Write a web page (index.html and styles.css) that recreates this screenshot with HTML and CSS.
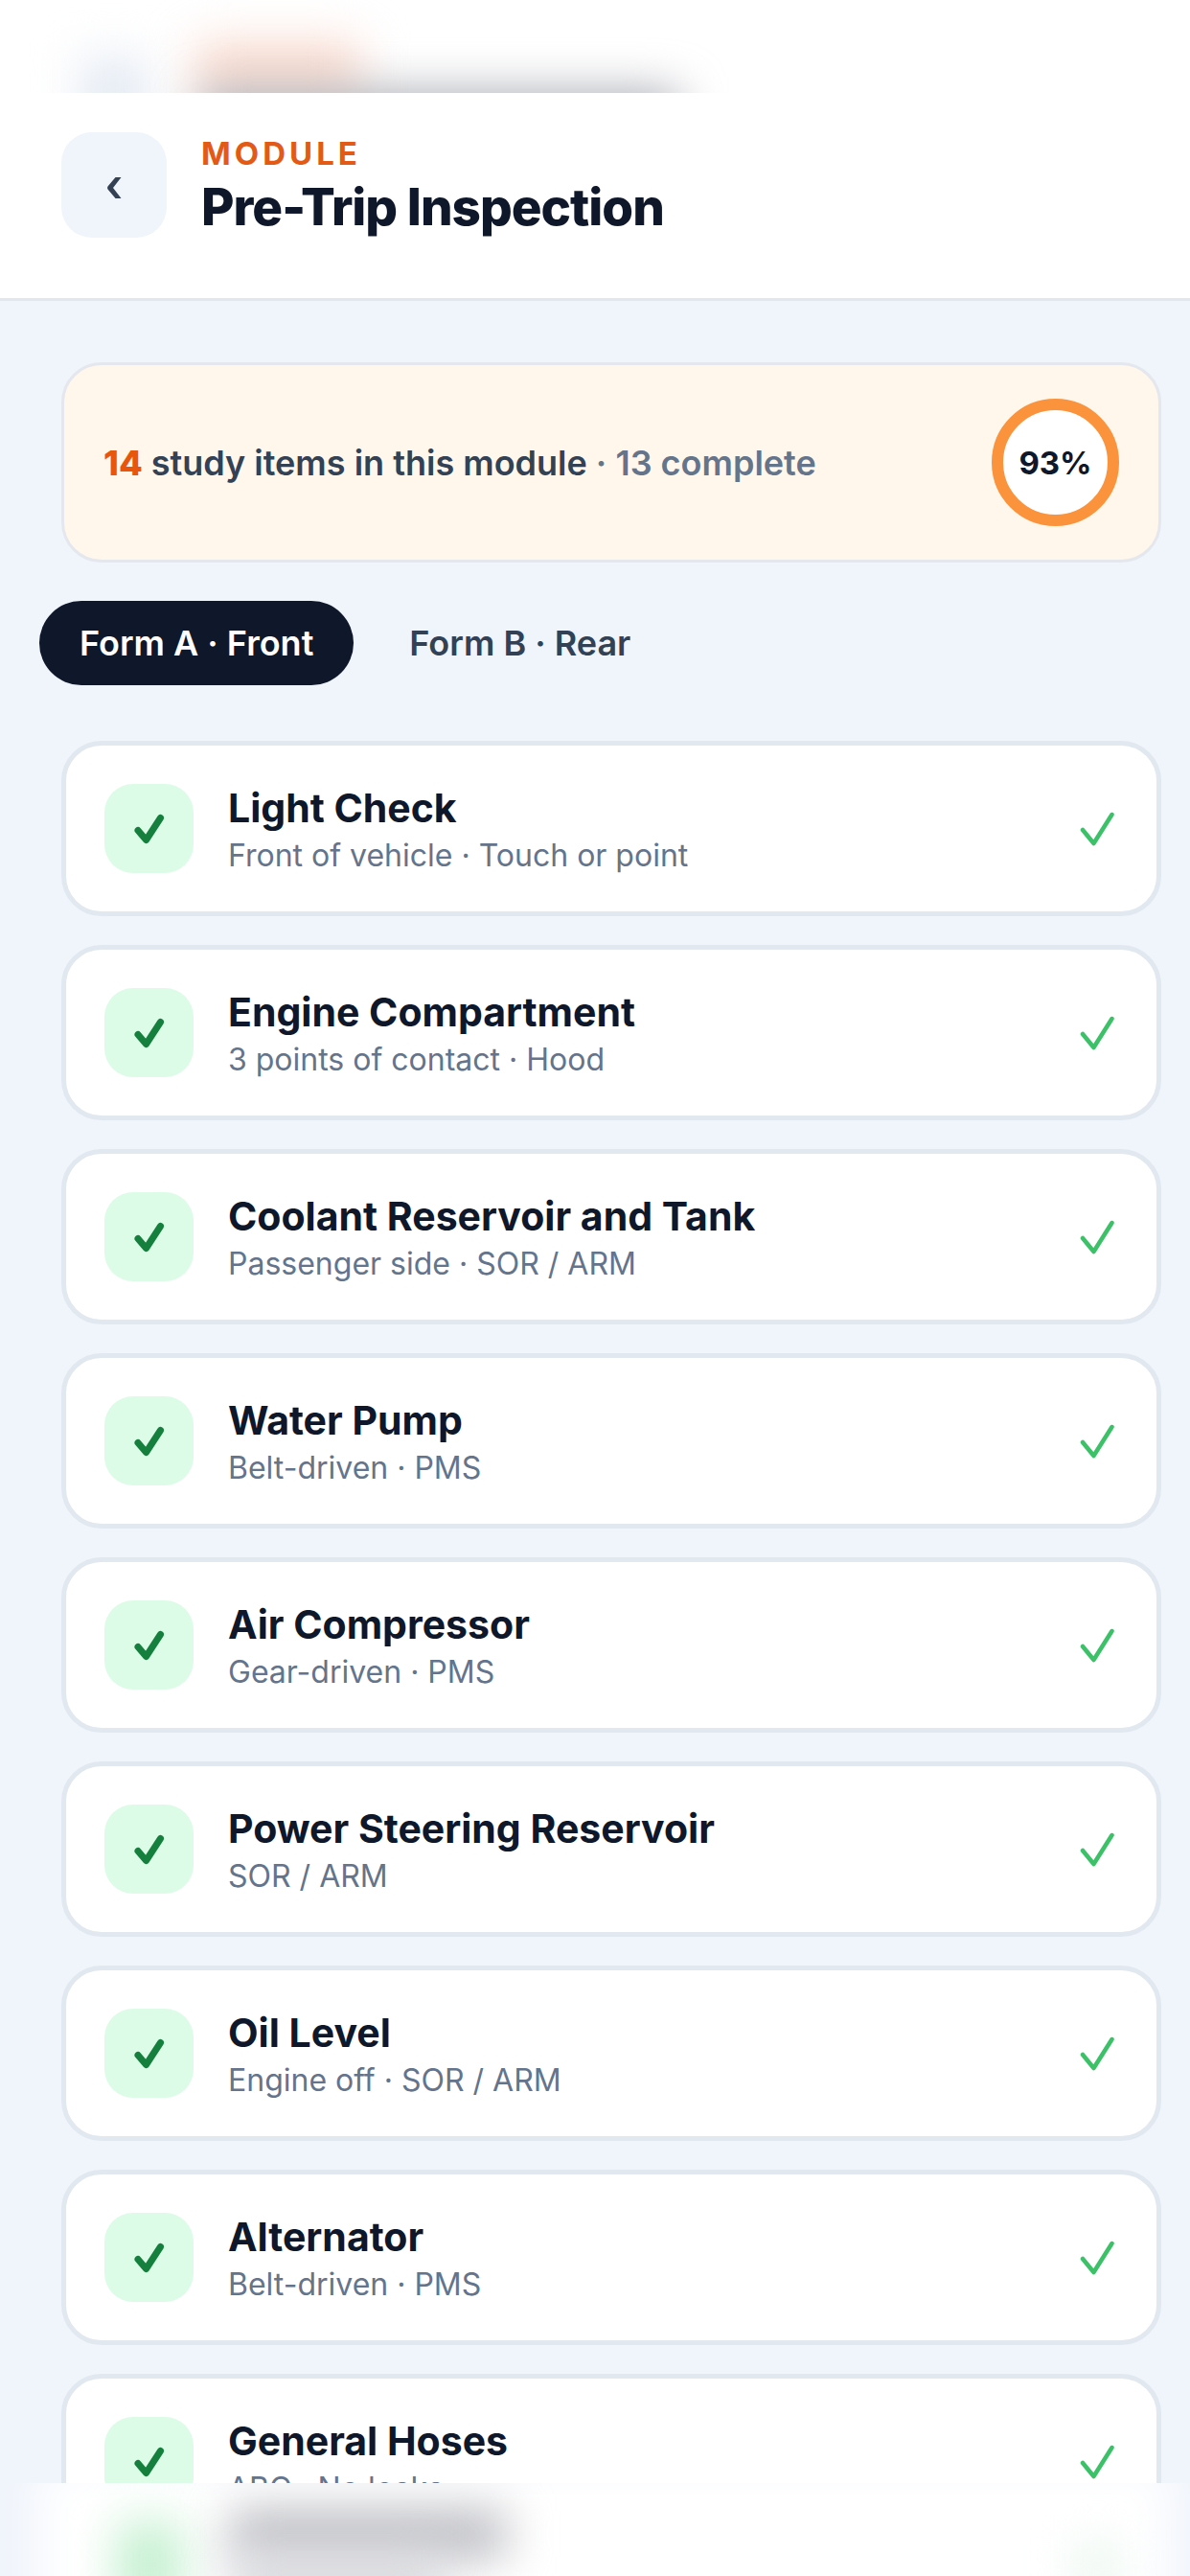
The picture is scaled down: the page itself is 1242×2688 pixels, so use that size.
FILE: index.html
```html
<!DOCTYPE html>
<html lang="en">
<head>
    <meta charset="utf-8">
    <meta name="viewport" content="width=device-width, initial-scale=1">
    <title>Pre-Trip Inspection</title>
    <link rel="stylesheet" href="styles.css">
</head>
<body>
    <!-- check shapes shared by every row -->
    <svg class="symbols" aria-hidden="true">
        <symbol id="check-bold" viewBox="0 0 32 32">
            <path d="M4 17.500 L12.500 27.500 L27.500 4.500" fill="none" stroke="currentColor" stroke-width="7" stroke-linecap="round" stroke-linejoin="round"/>
        </symbol>
        <symbol id="check-thin" viewBox="0 0 36 36">
            <path d="M3 19 L14.500 33 L33.500 3" fill="none" stroke="currentColor" stroke-width="4.500" stroke-linecap="round" stroke-linejoin="round"/>
        </symbol>
    </svg>

    <div class="app">
        <div class="top-glass" aria-hidden="true">
            <span class="smudge smudge-back"></span>
            <span class="smudge smudge-label"></span>
            <span class="smudge smudge-title"></span>
        </div>

        <header class="header">
            <button class="back" type="button" aria-label="Back">
                <svg viewBox="0 0 16 22" aria-hidden="true"><path d="M9.500 0 H15.500 L7 11 L15.500 22 H9.500 L1.500 12.500 Q.5 11 1.500 9.500 Z" fill="currentColor"/></svg>
            </button>
            <div>
                <p class="eyebrow">MODULE</p>
                <h1>Pre-Trip Inspection</h1>
            </div>
        </header>

        <main class="content">
            <section class="summary">
                <p><strong>14</strong> study items in this module <span>· 13 complete</span></p>
                <div class="ring">93%</div>
            </section>

            <nav class="tabs">
                <button class="tab active" type="button">Form A · Front</button>
                <button class="tab" type="button">Form B · Rear</button>
            </nav>

            <ul class="items">
                <li><a class="item" href="#light-check">
                    <span class="badge"><svg><use href="#check-bold"/></svg></span>
                    <span class="text"><b>Light Check</b><small>Front of vehicle · Touch or point</small></span>
                    <svg class="done"><use href="#check-thin"/></svg>
                </a></li>
                <li><a class="item" href="#engine-compartment">
                    <span class="badge"><svg><use href="#check-bold"/></svg></span>
                    <span class="text"><b>Engine Compartment</b><small>3 points of contact · Hood</small></span>
                    <svg class="done"><use href="#check-thin"/></svg>
                </a></li>
                <li><a class="item" href="#coolant">
                    <span class="badge"><svg><use href="#check-bold"/></svg></span>
                    <span class="text"><b>Coolant Reservoir and Tank</b><small>Passenger side · SOR / ARM</small></span>
                    <svg class="done"><use href="#check-thin"/></svg>
                </a></li>
                <li><a class="item" href="#water-pump">
                    <span class="badge"><svg><use href="#check-bold"/></svg></span>
                    <span class="text"><b>Water Pump</b><small>Belt-driven · PMS</small></span>
                    <svg class="done"><use href="#check-thin"/></svg>
                </a></li>
                <li><a class="item" href="#air-compressor">
                    <span class="badge"><svg><use href="#check-bold"/></svg></span>
                    <span class="text"><b>Air Compressor</b><small>Gear-driven · PMS</small></span>
                    <svg class="done"><use href="#check-thin"/></svg>
                </a></li>
                <li><a class="item" href="#power-steering">
                    <span class="badge"><svg><use href="#check-bold"/></svg></span>
                    <span class="text"><b>Power Steering Reservoir</b><small>SOR / ARM</small></span>
                    <svg class="done"><use href="#check-thin"/></svg>
                </a></li>
                <li><a class="item" href="#oil-level">
                    <span class="badge"><svg><use href="#check-bold"/></svg></span>
                    <span class="text"><b>Oil Level</b><small>Engine off · SOR / ARM</small></span>
                    <svg class="done"><use href="#check-thin"/></svg>
                </a></li>
                <li><a class="item" href="#alternator">
                    <span class="badge"><svg><use href="#check-bold"/></svg></span>
                    <span class="text"><b>Alternator</b><small>Belt-driven · PMS</small></span>
                    <svg class="done"><use href="#check-thin"/></svg>
                </a></li>
                <li><a class="item" href="#general-hoses">
                    <span class="badge"><svg><use href="#check-bold"/></svg></span>
                    <span class="text"><b>General Hoses</b><small>ABC · No leaks</small></span>
                    <svg class="done"><use href="#check-thin"/></svg>
                </a></li>
            </ul>
        </main>

        <div class="bottom-glass" aria-hidden="true">
            <span class="smudge smudge-card"></span>
            <span class="smudge smudge-badge"></span>
            <span class="smudge smudge-name"></span>
            <span class="smudge smudge-note"></span>
            <span class="smudge smudge-done"></span>
        </div>
    </div>
</body>
</html>
```
FILE: styles.css
```css
* {
    box-sizing: border-box;
}

body {
    margin: 0;
    font-family: Inter, "Liberation Sans", sans-serif;
    color: #0f172a;
    background: #f0f4fb;
}

h1, p, ul {
    margin: 0;
    padding: 0;
}

button {
    font: inherit;
    border: none;
    cursor: pointer;
}

.symbols {
    display: none;
}

.app {
    height: 100vh;
    display: flex;
    flex-direction: column;
}

/* frosted strips at the screen edges */
.top-glass, .bottom-glass {
    position: relative;
    flex: none;
    height: 97px;
    overflow: hidden;
}

.top-glass {
    background: #fff;
}

.smudge {
    position: absolute;
    filter: blur(24px);
}

.smudge-back {
    left: 84px;
    top: 60px;
    width: 70px;
    height: 80px;
    background: #e4eaf3;
}

.smudge-label {
    left: 204px;
    top: 44px;
    width: 172px;
    height: 60px;
    background: #f8dace;
}

.smudge-title {
    left: 208px;
    top: 96px;
    width: 500px;
    height: 70px;
    background: #a9abb3;
}

.smudge-card {
    left: 40px;
    right: 20px;
    top: -20px;
    height: 180px;
    background: #fff;
}

.smudge-badge {
    left: 122px;
    top: 40px;
    width: 68px;
    height: 90px;
    background: #c4f0d0;
}

.smudge-name {
    left: 240px;
    top: 28px;
    width: 288px;
    height: 50px;
    background: #b9bac0;
}

.smudge-note {
    left: 242px;
    top: 76px;
    width: 220px;
    height: 50px;
    background: #d6d7db;
}

.smudge-done {
    left: 1120px;
    top: 62px;
    width: 50px;
    height: 50px;
    background: #eaf6ee;
}

.header {
    flex: none;
    display: flex;
    align-items: flex-start;
    gap: 36px;
    padding: 41px 64px 61px;
    background: #fff;
    border-bottom: 3px solid #e2e6ee;
}

.back {
    display: grid;
    place-items: center;
    width: 110px;
    height: 110px;
    padding: 6px 0 0;
    border-radius: 32px;
    color: #334155;
    background: #f0f4fb;
}

.back svg {
    width: 16px;
    height: 22px;
}

.eyebrow {
    color: #e25a15;
    font-size: 33px;
    line-height: 44px;
    font-weight: 700;
    letter-spacing: 4px;
}

h1 {
    font-size: 53px;
    line-height: 68px;
    font-weight: 800;
    letter-spacing: -1px;
}

.content {
    flex: 1;
    min-height: 0;
    overflow-y: auto;
    scrollbar-width: none;
    padding: 64px 30px 64px 64px;
}

.summary {
    display: flex;
    align-items: center;
    justify-content: space-between;
    padding: 35px 41px;
    color: #334155;
    background: #fff7eb;
    border: 3px solid #e4e7ee;
    border-radius: 42px;
    font-size: 36px;
    line-height: 40px;
    font-weight: 600;
}

.summary strong {
    color: #e8560e;
    font-weight: 800;
}

.summary span {
    color: #64748b;
}

.ring {
    display: grid;
    place-items: center;
    width: 133px;
    height: 133px;
    border: 12px solid #fb923c;
    border-radius: 50%;
    color: #0f172a;
    background: #fff;
    font-size: 33px;
    font-weight: 700;
}

.tabs {
    display: flex;
    gap: 16px;
    margin: 40px 0 58px -23px;
}

.tab {
    padding: 22px 42px;
    border-radius: 44px;
    color: #334155;
    background: none;
    font-size: 36px;
    line-height: 44px;
    font-weight: 600;
}

.tab.active {
    color: #fff;
    background: #0f172a;
}

.items {
    display: grid;
    gap: 30px;
    list-style: none;
}

.item {
    display: flex;
    align-items: center;
    gap: 36px;
    padding: 33px 44px 33px 40px;
    color: inherit;
    background: #fff;
    border: 5px solid #e2e8f0;
    border-radius: 42px;
    text-decoration: none;
}

.badge {
    display: grid;
    place-items: center;
    width: 93px;
    height: 93px;
    border-radius: 30px;
    color: #15803d;
    background: #dcfce7;
}

.badge svg {
    width: 32px;
    height: 32px;
}

.text {
    flex: 1;
    display: flex;
    flex-direction: column;
    padding-top: 7px;
}

.text b {
    font-size: 41px;
    line-height: 50px;
    font-weight: 700;
}

.text small {
    color: #64748b;
    font-size: 32px;
    line-height: 50px;
}

.done {
    width: 36px;
    height: 36px;
    color: #3cc168;
}
```
